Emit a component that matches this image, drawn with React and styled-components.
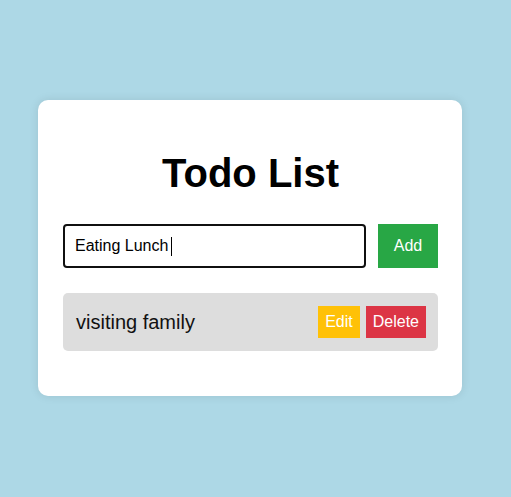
import React, { useState } from 'react'
import styled, { createGlobalStyle } from 'styled-components'

const GlobalStyle = createGlobalStyle`
    html, body {
        margin: 0;
        padding: 0;
        background: #add8e6;
        font-family: 'Liberation Sans', Arial, sans-serif;
    }
`

const Page = styled.div`
    min-height: 497px;
    box-sizing: border-box;
    padding: 100px 49px 0 38px;
`

const Card = styled.div`
    background: #fff;
    border-radius: 10px;
    box-shadow: 0 0 10px rgba(0, 0, 0, 0.1);
    padding: 20px 24px 45px 25px;
`

const Title = styled.h1`
    margin: 31px 0 28px;
    font-size: 40px;
    font-weight: bold;
    text-align: center;
    color: #000;
`

const Form = styled.form`
    display: flex;
    gap: 12px;
    margin: 0 0 25px;
`

const Field = styled.div`
    flex: 1;
    position: relative;
    display: flex;
`

const Input = styled.input`
    flex: 1;
    min-width: 0;
    height: 44px;
    box-sizing: border-box;
    padding: 0 10px;
    border: 2px solid #101010;
    border-radius: 4px;
    outline: none;
    font-family: inherit;
    font-size: 16px;
    color: #000;
    caret-color: transparent;
`

// static text cursor drawn over the field
const Caret = styled.span`
    position: absolute;
    left: 108px;
    top: 13px;
    width: 1px;
    height: 19px;
    background: #000;
    pointer-events: none;
`

const Button = styled.button`
    border: none;
    border-radius: 0;
    color: #fff;
    font-family: inherit;
    font-size: 16px;
    cursor: pointer;
    background: ${(p) => p.$bg};
    padding: ${(p) => (p.$big ? '0' : '0 7px')};
    width: ${(p) => (p.$big ? '60px' : 'auto')};
    height: ${(p) => (p.$big ? '44px' : '32px')};
`

const List = styled.ul`
    list-style: none;
    margin: 0;
    padding: 0;
`

const Item = styled.li`
    display: flex;
    align-items: center;
    background: #ddd;
    border-radius: 5px;
    padding: 13px 12px 13px 13px;
    font-size: 20px;
    color: #111;
`

const Text = styled.span`
    flex: 1;
`

const Actions = styled.div`
    display: flex;
    gap: 6px;
`

function App() {
    const [value, setValue] = useState('Eating Lunch')
    const [todos] = useState(['visiting family'])

    return (
        <Page>
            <GlobalStyle />
            <Card>
                <Title>Todo List</Title>
                <Form onSubmit={(e) => e.preventDefault()}>
                    <Field>
                        <Input value={value} onChange={(e) => setValue(e.target.value)} />
                        <Caret />
                    </Field>
                    <Button type='submit' $big $bg='#28a745'>Add</Button>
                </Form>
                <List>
                    {todos.map((t) => (
                        <Item key={t}>
                            <Text>{t}</Text>
                            <Actions>
                                <Button $bg='#ffc107'>Edit</Button>
                                <Button $bg='#dc3545'>Delete</Button>
                            </Actions>
                        </Item>
                    ))}
                </List>
            </Card>
        </Page>
    )
}

export default App
